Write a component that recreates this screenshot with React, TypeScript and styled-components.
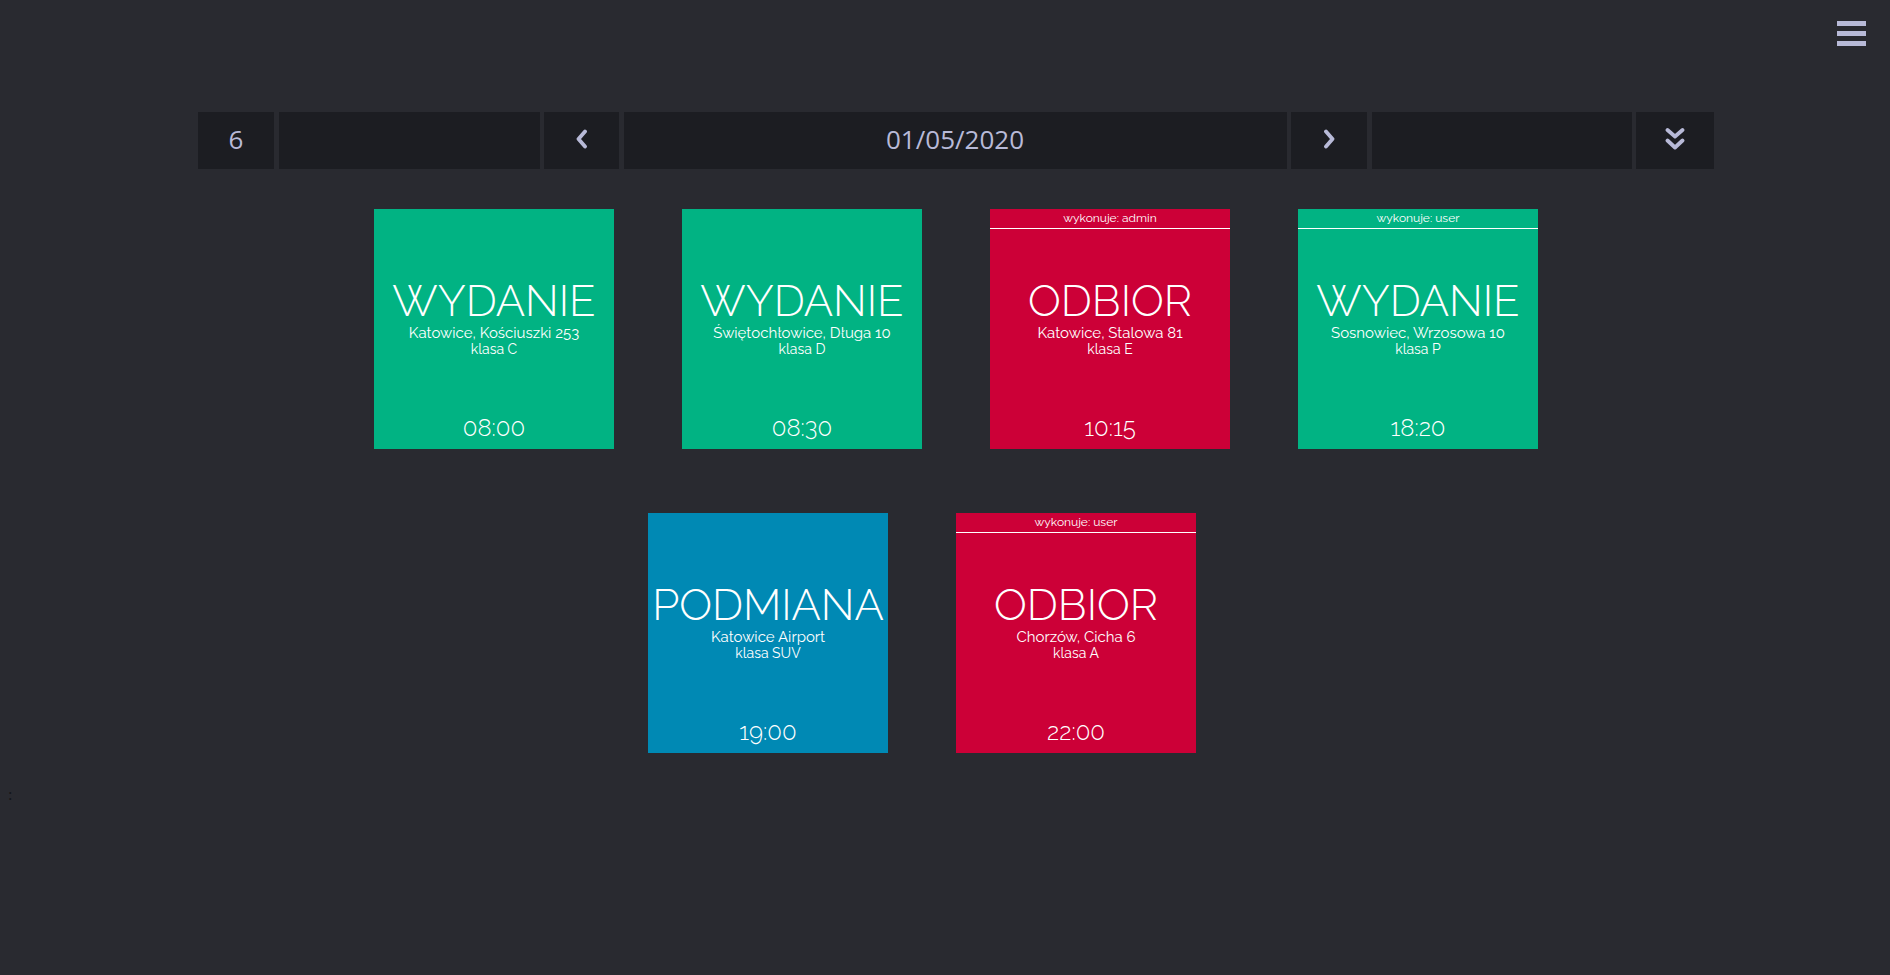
import React from "react";
import styled, { createGlobalStyle } from "styled-components";

const GlobalStyle = createGlobalStyle`
  html, body { margin: 0; padding: 0; background: #292a30; }
  body { min-height: 975px; font-family: "Open Sans", "Noto Sans", sans-serif; }
  #root { min-height: 975px; }
`;

const LAV = "#b8bad8";

const Page = styled.div`
  position: relative;
  padding: 112px 176px 0 198px;
  min-height: 975px;
  box-sizing: border-box;
`;

const MenuButton = styled.button`
  position: absolute;
  top: 21px;
  right: 24px;
  width: 29px;
  height: 25px;
  padding: 0;
  border: 0;
  background: transparent;
  display: flex;
  flex-direction: column;
  justify-content: space-between;
  cursor: pointer;
`;

const MenuBar = styled.span`
  display: block;
  width: 29px;
  height: 5px;
  background: ${LAV};
`;

const Toolbar = styled.div`
  display: grid;
  grid-template-columns: 76px 261px 75px 663px 76px 260px 78px;
  column-gap: 4.5px;
  height: 57px;
`;

const Cell = styled.div`
  background: #1c1d22;
  display: flex;
  align-items: center;
  justify-content: center;
  padding-bottom: 4px;
  box-sizing: border-box;
  color: ${LAV};
  font-family: "Open Sans", "Noto Sans", sans-serif;
  font-size: 26px;
`;

const Cards = styled.div`
  display: flex;
  flex-direction: column;
  gap: 64px;
  margin-top: 40px;
`;

const Row = styled.div<{ $trail?: number }>`
  display: flex;
  justify-content: center;
  gap: 68px;
  padding-right: ${(p) => p.$trail ?? 0}px;
`;

const Card = styled.div<{ $bg: string }>`
  position: relative;
  width: 240px;
  height: 240px;
  background: ${(p) => p.$bg};
  color: #fff;
  font-family: "Raleway", "Lato", sans-serif;
  font-weight: 300;
  display: flex;
  flex-direction: column;
  align-items: center;
  text-align: center;
`;

const Header = styled.div`
  position: absolute;
  top: 0;
  left: 0;
  right: 0;
  height: 19px;
  line-height: 18px;
  border-bottom: 1px solid #fff;
  font-size: 12px;
  font-weight: 400;
`;

const Title = styled.div`
  margin-top: 70px;
  font-size: 43.5px;
  line-height: 44px;
  white-space: nowrap;
`;

const Address = styled.div`
  margin-top: 3px;
  font-size: 15px;
  line-height: 15px;
  font-weight: 400;
`;

const Klass = styled.div`
  margin-top: 1px;
  font-size: 14px;
  line-height: 15px;
  font-weight: 400;
`;

const Time = styled.div`
  margin-top: auto;
  margin-bottom: 10px;
  font-size: 24px;
  line-height: 22px;
`;

const Footer = styled.div`
  margin: 33px 0 0 -190px;
  font-family: "Liberation Serif", serif;
  font-size: 16px;
  color: #141519;
`;

const ChevronLeft = () => (
  <svg width="13" height="20" viewBox="0 0 13 20">
    <path d="M10 2.5 L3.5 10 L10 17.5" fill="none" stroke={LAV} strokeWidth="3.8" strokeLinecap="round" strokeLinejoin="round" />
  </svg>
);

const ChevronRight = () => (
  <svg width="13" height="20" viewBox="0 0 13 20">
    <path d="M3 2.5 L9.5 10 L3 17.5" fill="none" stroke={LAV} strokeWidth="3.8" strokeLinecap="round" strokeLinejoin="round" />
  </svg>
);

const DoubleDown = () => (
  <svg width="20" height="24" viewBox="0 0 20 24">
    <path d="M2.5 3 L10 9.5 L17.5 3" fill="none" stroke={LAV} strokeWidth="3.8" strokeLinecap="round" strokeLinejoin="round" />
    <path d="M2.5 13.5 L10 20.5 L17.5 13.5" fill="none" stroke={LAV} strokeWidth="3.8" strokeLinecap="round" strokeLinejoin="round" />
  </svg>
);

type Job = { kind: string; addr: string; cls: string; time: string; bg: string; by?: string };

const GREEN = "#01b383";
const RED = "#cc0037";
const BLUE = "#0089b4";

const row1: Job[] = [
  { kind: "WYDANIE", addr: "Katowice, Kościuszki 253", cls: "klasa C", time: "08:00", bg: GREEN },
  { kind: "WYDANIE", addr: "Świętochłowice, Długa 10", cls: "klasa D", time: "08:30", bg: GREEN },
  { kind: "ODBIOR", addr: "Katowice, Stalowa 81", cls: "klasa E", time: "10:15", bg: RED, by: "admin" },
  { kind: "WYDANIE", addr: "Sosnowiec, Wrzosowa 10", cls: "klasa P", time: "18:20", bg: GREEN, by: "user" },
];

const row2: Job[] = [
  { kind: "PODMIANA", addr: "Katowice Airport", cls: "klasa SUV", time: "19:00", bg: BLUE },
  { kind: "ODBIOR", addr: "Chorzów, Cicha 6", cls: "klasa A", time: "22:00", bg: RED, by: "user" },
];

const JobCard = ({ job }: { job: Job }) => (
  <Card $bg={job.bg}>
    {job.by && <Header>wykonuje: {job.by}</Header>}
    <Title>{job.kind}</Title>
    <Address>{job.addr}</Address>
    <Klass>{job.cls}</Klass>
    <Time>{job.time}</Time>
  </Card>
);

export default function App() {
  return (
    <>
      <GlobalStyle />
      <Page>
        <MenuButton aria-label="menu">
          <MenuBar />
          <MenuBar />
          <MenuBar />
        </MenuButton>
        <Toolbar>
          <Cell>6</Cell>
          <Cell />
          <Cell><ChevronLeft /></Cell>
          <Cell>01/05/2020</Cell>
          <Cell><ChevronRight /></Cell>
          <Cell />
          <Cell><DoubleDown /></Cell>
        </Toolbar>
        <Cards>
          <Row>
            {row1.map((j, i) => <JobCard key={i} job={j} />)}
          </Row>
          <Row $trail={68}>
            {row2.map((j, i) => <JobCard key={i} job={j} />)}
          </Row>
        </Cards>
        <Footer>:</Footer>
      </Page>
    </>
  );
}
